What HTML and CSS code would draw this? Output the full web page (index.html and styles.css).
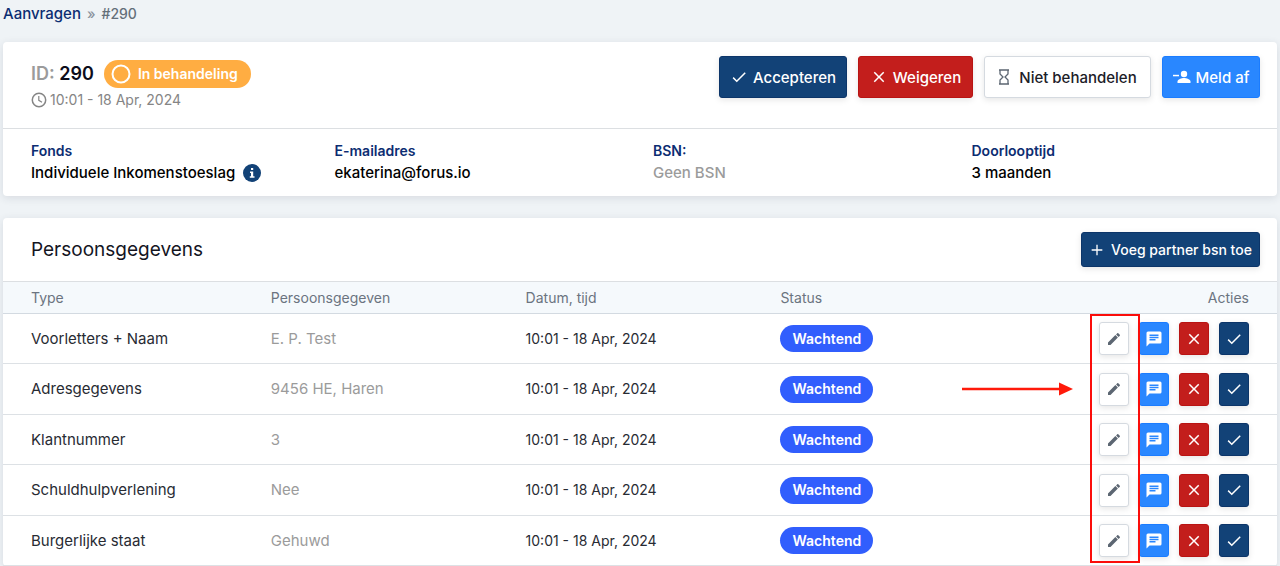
FILE: index.html
```html
<!DOCTYPE html>
<html lang="nl">
<head>
<meta charset="utf-8">
<meta name="viewport" content="width=device-width, initial-scale=1">
<title>Aanvraag #290</title>
<link rel="stylesheet" href="styles.css">
</head>
<body>
<svg class="sprite" aria-hidden="true">
  <symbol id="i-check" viewBox="0 0 24 24"><path fill="currentColor" d="M21 7 9 19l-5.500-5.500 1.410-1.410L9 16.170 19.590 5.590z"/></symbol>
  <symbol id="i-close" viewBox="0 0 24 24"><path fill="currentColor" d="M19 6.410 17.590 5 12 10.590 6.410 5 5 6.410 10.590 12 5 17.590 6.410 19 12 13.410 17.590 19 19 17.590 13.410 12z"/></symbol>
  <symbol id="i-plus" viewBox="0 0 24 24"><path fill="currentColor" d="M20 13h-7v7h-2v-7H4v-2h7V4h2v7h7z"/></symbol>
  <symbol id="i-pencil" viewBox="0 0 24 24"><path fill="currentColor" d="M20.710 7.040c.390-.390.390-1.040 0-1.410l-2.340-2.340c-.370-.390-1.020-.390-1.410 0l-1.840 1.830 3.750 3.750M3 17.250V21h3.750L17.810 9.930l-3.750-3.750z"/></symbol>
  <symbol id="i-message" viewBox="0 0 24 24"><path fill="currentColor" d="M20 2H4a2 2 0 0 0-2 2v18l4-4h14a2 2 0 0 0 2-2V4a2 2 0 0 0-2-2M6 6h12v2H6zm0 3h12v2H6zm0 3h8v2H6z"/></symbol>
</svg>

<nav class="breadcrumbs" aria-label="Kruimelpad">
  <a class="crumb-link" href="#">Aanvragen</a>
  <span class="crumb-sep">»</span>
  <span class="crumb-current">#290</span>
</nav>

<main class="content">
  <section class="card">
    <header class="card-header request-header">
      <div class="request">
        <div class="request-title">
          <h1 class="request-id"><span class="muted">ID:</span> 290</h1>
          <span class="status-badge">
            <svg class="status-icon" viewBox="0 0 20 20" aria-hidden="true"><circle cx="10" cy="10" r="8.500" fill="none" stroke="currentColor" stroke-width="2"/></svg>
            In behandeling
          </span>
        </div>
        <div class="request-date">
          <svg class="icon-clock" viewBox="0 0 16 16" fill="none" stroke="currentColor" stroke-width="1.500" aria-hidden="true"><circle cx="8" cy="8" r="6.700"/><path d="M7.800 4v4.300l3.200 2" stroke-width="1.200"/></svg>
          10:01 - 18 Apr, 2024
        </div>
      </div>
      <div class="request-actions">
        <button class="button button-navy button-accept" type="button"><svg class="icon" aria-hidden="true"><use href="#i-check"/></svg>Accepteren</button>
        <button class="button button-red button-decline" type="button"><svg class="icon" aria-hidden="true"><use href="#i-close"/></svg>Weigeren</button>
        <button class="button button-default button-disregard" type="button">
          <svg class="icon-hourglass" viewBox="0 0 12 16" fill="none" stroke="currentColor" stroke-width="1.300" aria-hidden="true"><path d="M1 1h10M1 15h10M2 1v4l3 3-3 3v4M10 1v4L7 8l3 3v4"/></svg>Niet behandelen</button>
        <button class="button button-blue button-resign" type="button">
          <svg class="icon-resign" viewBox="0 0 18 14" fill="currentColor" aria-hidden="true"><path d="M0 4.800h6v1.500H0z"/><circle cx="11" cy="4" r="3.200"/><path d="M4.500 13v-1.500C4.500 9.200 8.600 8 11 8s6.500 1.200 6.500 3.500V13z"/></svg>Meld af</button>
      </div>
    </header>
    <dl class="facts">
      <div class="fact">
        <dt class="fact-label">Fonds</dt>
        <dd class="fact-value">Individuele Inkomenstoeslag
          <svg class="icon-info" viewBox="0 0 18 18" role="img" aria-label="Informatie"><circle cx="9" cy="9" r="9" fill="#124277"/><path d="M8 4h2.200v2H8zM7 7.500h3.200v4.700h1.300v1.500H6.800v-1.500H8V9H7z" fill="#fff"/></svg>
        </dd>
      </div>
      <div class="fact"><dt class="fact-label">E-mailadres</dt><dd class="fact-value">ekaterina@forus.io</dd></div>
      <div class="fact"><dt class="fact-label">BSN:</dt><dd class="fact-value muted">Geen BSN</dd></div>
      <div class="fact"><dt class="fact-label">Doorlooptijd</dt><dd class="fact-value">3 maanden</dd></div>
    </dl>
  </section>

  <section class="card">
    <header class="card-header records-header">
      <h2 class="card-title">Persoonsgegevens</h2>
      <button class="button button-navy button-add" type="button"><svg class="icon-small" aria-hidden="true"><use href="#i-plus"/></svg>Voeg partner bsn toe</button>
    </header>
    <div class="records-wrap">
      <table class="records">
        <thead>
          <tr><th scope="col">Type</th><th scope="col">Persoonsgegeven</th><th scope="col">Datum, tijd</th><th scope="col">Status</th><th scope="col" class="cell-actions">Acties</th></tr>
        </thead>
        <tbody>
          <tr>
            <td>Voorletters + Naam</td><td class="muted">E. P. Test</td><td class="cell-date">10:01 - 18 Apr, 2024</td><td><span class="tag">Wachtend</span></td>
            <td><div class="row-actions">
              <button class="icon-button button-default" type="button" aria-label="Bewerken"><svg class="icon-small"><use href="#i-pencil"/></svg></button>
              <button class="icon-button button-blue" type="button" aria-label="Bericht"><svg class="icon"><use href="#i-message"/></svg></button>
              <button class="icon-button button-red" type="button" aria-label="Weigeren"><svg class="icon"><use href="#i-close"/></svg></button>
              <button class="icon-button button-navy" type="button" aria-label="Accepteren"><svg class="icon"><use href="#i-check"/></svg></button>
            </div></td>
          </tr>
          <tr>
            <td>Adresgegevens</td><td class="muted">9456 HE, Haren</td><td class="cell-date">10:01 - 18 Apr, 2024</td><td><span class="tag">Wachtend</span></td>
            <td><div class="row-actions">
              <button class="icon-button button-default" type="button" aria-label="Bewerken"><svg class="icon-small"><use href="#i-pencil"/></svg></button>
              <button class="icon-button button-blue" type="button" aria-label="Bericht"><svg class="icon"><use href="#i-message"/></svg></button>
              <button class="icon-button button-red" type="button" aria-label="Weigeren"><svg class="icon"><use href="#i-close"/></svg></button>
              <button class="icon-button button-navy" type="button" aria-label="Accepteren"><svg class="icon"><use href="#i-check"/></svg></button>
            </div></td>
          </tr>
          <tr>
            <td>Klantnummer</td><td class="muted">3</td><td class="cell-date">10:01 - 18 Apr, 2024</td><td><span class="tag">Wachtend</span></td>
            <td><div class="row-actions">
              <button class="icon-button button-default" type="button" aria-label="Bewerken"><svg class="icon-small"><use href="#i-pencil"/></svg></button>
              <button class="icon-button button-blue" type="button" aria-label="Bericht"><svg class="icon"><use href="#i-message"/></svg></button>
              <button class="icon-button button-red" type="button" aria-label="Weigeren"><svg class="icon"><use href="#i-close"/></svg></button>
              <button class="icon-button button-navy" type="button" aria-label="Accepteren"><svg class="icon"><use href="#i-check"/></svg></button>
            </div></td>
          </tr>
          <tr>
            <td>Schuldhulpverlening</td><td class="muted">Nee</td><td class="cell-date">10:01 - 18 Apr, 2024</td><td><span class="tag">Wachtend</span></td>
            <td><div class="row-actions">
              <button class="icon-button button-default" type="button" aria-label="Bewerken"><svg class="icon-small"><use href="#i-pencil"/></svg></button>
              <button class="icon-button button-blue" type="button" aria-label="Bericht"><svg class="icon"><use href="#i-message"/></svg></button>
              <button class="icon-button button-red" type="button" aria-label="Weigeren"><svg class="icon"><use href="#i-close"/></svg></button>
              <button class="icon-button button-navy" type="button" aria-label="Accepteren"><svg class="icon"><use href="#i-check"/></svg></button>
            </div></td>
          </tr>
          <tr>
            <td>Burgerlijke staat</td><td class="muted">Gehuwd</td><td class="cell-date">10:01 - 18 Apr, 2024</td><td><span class="tag">Wachtend</span></td>
            <td><div class="row-actions">
              <button class="icon-button button-default" type="button" aria-label="Bewerken"><svg class="icon-small"><use href="#i-pencil"/></svg></button>
              <button class="icon-button button-blue" type="button" aria-label="Bericht"><svg class="icon"><use href="#i-message"/></svg></button>
              <button class="icon-button button-red" type="button" aria-label="Weigeren"><svg class="icon"><use href="#i-close"/></svg></button>
              <button class="icon-button button-navy" type="button" aria-label="Accepteren"><svg class="icon"><use href="#i-check"/></svg></button>
            </div></td>
          </tr>
        </tbody>
      </table>
      <div class="highlight" aria-hidden="true"></div>
      <svg class="arrow" viewBox="0 0 111 14" aria-hidden="true"><path d="M0 7h98" stroke="#ff1a0a" stroke-width="2.500"/><path d="M97 0.500 111 7 97 13.500z" fill="#ff1a0a"/></svg>
    </div>
  </section>
</main>
</body>
</html>
```

FILE: styles.css
```css
* {
  box-sizing: border-box;
}

body {
  margin: 0;
  background: #eff3f6;
  color: #282b33;
  font-family: Inter, "Open Sans", sans-serif;
  font-size: 14px;
  line-height: 20px;
}

.sprite {
  display: none;
}

.muted {
  color: #9b9b9b;
}

.breadcrumbs {
  display: flex;
  gap: 6px;
  padding: 4px 3px 18px;
  font-size: 15px;
  font-weight: 500;
}

.crumb-link {
  color: #0c2d72;
  text-decoration: none;
}

.crumb-sep {
  color: #8a929c;
  font-size: 14px;
}

.crumb-current {
  color: #646f79;
  font-size: 14px;
}

.content {
  display: flex;
  flex-direction: column;
  gap: 22px;
  padding: 0 3px;
}

.card {
  background: #fff;
  border-radius: 4px;
  box-shadow: 0 2px 8px rgba(40, 50, 70, 0.12);
}

.card-header {
  display: flex;
  align-items: center;
  justify-content: space-between;
  padding: 14px 17px 14px 28px;
  border-bottom: 1px solid #dcdfe2;
}

.request-header {
  align-items: flex-start;
  min-height: 87px;
}

.request {
  padding-top: 4px;
}

.request-title {
  display: flex;
  align-items: center;
  gap: 10px;
}

.request-id {
  margin: 0;
  color: #0c0d1c;
  font-size: 18px;
  font-weight: 600;
}

.status-badge {
  display: flex;
  align-items: center;
  gap: 7px;
  height: 28px;
  padding: 0 13px 0 7px;
  border-radius: 14px;
  background: #ffad42;
  color: #fff;
  font-weight: 600;
}

.status-icon {
  width: 20px;
  height: 20px;
}

.request-date {
  display: flex;
  align-items: center;
  gap: 3px;
  padding-top: 2px;
  color: #858585;
}

.icon-clock {
  width: 16px;
  height: 16px;
}

.request-actions {
  display: flex;
  gap: 11px;
}

.button {
  display: flex;
  align-items: center;
  justify-content: center;
  gap: 5px;
  height: 42px;
  padding: 0 8px;
  border: 1px solid;
  border-radius: 3px;
  box-shadow: 0 2px 6px rgba(0, 0, 0, 0.1);
  font-family: inherit;
  font-size: 15px;
  font-weight: 500;
  white-space: nowrap;
}

.button-navy {
  border-color: #0c3569;
  background: #124277;
  color: #fff;
}

.button-red {
  border-color: #b91413;
  background: #c31e1c;
  color: #fff;
}

.button-default {
  border-color: #d5dae0;
  background: #fff;
  color: #1c2028;
}

.button-blue {
  border-color: #1b7cff;
  background: #2987ff;
  color: #fff;
}

.button-accept {
  min-width: 128px;
}

.button-decline {
  min-width: 115px;
}

.button-disregard {
  min-width: 167px;
  gap: 9px;
}

.button-resign {
  min-width: 98px;
}

.button-add {
  min-width: 179px;
  height: 35px;
  padding: 0 7px;
  gap: 6px;
  font-size: 14px;
}

.icon {
  width: 18px;
  height: 18px;
}

.icon-small {
  width: 16px;
  height: 16px;
}

.icon-hourglass {
  width: 12px;
  height: 16px;
  color: #5c6672;
}

.icon-resign {
  width: 18px;
  height: 14px;
}

.facts {
  display: flex;
  margin: 0;
  padding: 12px 0 11px;
}

.fact {
  flex: 0 0 25%;
  padding-left: 13px;
}

.fact:first-child {
  padding-left: 28px;
}

.fact-label {
  color: #0c2d72;
  font-weight: 600;
}

.fact-value {
  display: flex;
  align-items: center;
  gap: 8px;
  height: 24px;
  margin: 0;
  font-size: 15px;
  font-weight: 500;
}

.fact-value:not(.muted) {
  color: #000;
}

.icon-info {
  width: 18px;
  height: 18px;
}

.card-title {
  margin: 0;
  color: #14151f;
  font-size: 19px;
  font-weight: 400;
}

.records-header {
  min-height: 64px;
}

.records-wrap {
  position: relative;
}

.records {
  width: 100%;
  table-layout: fixed;
  border-collapse: separate;
  border-spacing: 0;
}

.records th,
.records td {
  padding: 0 13px;
  border-bottom: 1px solid #dde1e5;
  text-align: left;
}

.records th:first-child,
.records td:first-child {
  padding-left: 28px;
}

.records th:last-child,
.records td:last-child {
  padding-right: 28px;
}

.records th {
  height: 32px;
  border-bottom-color: #d3dae1;
  background: #f5f9fc;
  color: #6b7480;
  font-weight: 400;
}

.records td {
  height: 50px;
  font-size: 15px;
}

.records tr:nth-child(even) td {
  height: 51px;
}

.records .cell-date {
  font-size: 14px;
}

.records .cell-actions {
  text-align: right;
}

.tag {
  display: inline-flex;
  align-items: center;
  justify-content: center;
  min-width: 93px;
  height: 27px;
  padding: 0 11px;
  border-radius: 14px;
  background: #315efd;
  color: #fff;
  font-size: 14px;
  font-weight: 600;
  vertical-align: middle;
}

.row-actions {
  display: flex;
  justify-content: flex-end;
  gap: 10px;
}

.icon-button {
  display: flex;
  align-items: center;
  justify-content: center;
  width: 30px;
  height: 33px;
  padding: 0;
  border: 1px solid;
  border-radius: 3px;
  box-shadow: 0 2px 6px rgba(0, 0, 0, 0.1);
}

.icon-button.button-default {
  border-color: #d5dae0;
  color: #5c6672;
}

.icon-button.button-navy {
  border-color: #0c3569;
}

.icon-button.button-red {
  border-color: #b91413;
}

.icon-button.button-blue {
  border-color: #1b7cff;
}

/* Annotation drawn over the edit buttons */
.highlight {
  position: absolute;
  top: 32px;
  right: 137px;
  bottom: 3px;
  width: 50px;
  border: 2px solid #fb0d0a;
}

.arrow {
  position: absolute;
  top: 100px;
  right: 204px;
  width: 111px;
  height: 14px;
}
```
